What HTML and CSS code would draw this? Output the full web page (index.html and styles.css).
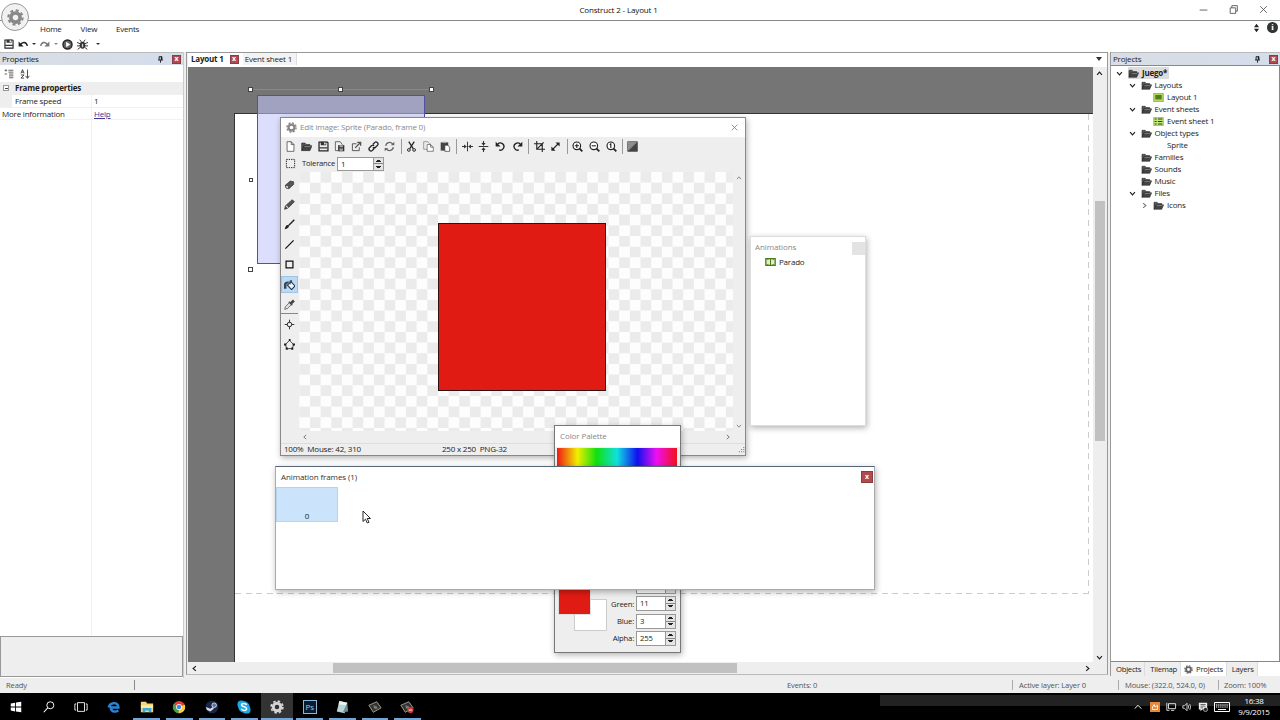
FILE: index.html
```html
<!DOCTYPE html>
<html lang="en">
<head>
  <meta charset="UTF-8">
  <title>Construct 2 - Layout 1</title>
  <link rel="stylesheet" href="styles.css">
</head>
<body>
<svg class="defs">
  <symbol id="gear" viewBox="0 0 16 16"><circle cx="8" cy="8" r="4.3" fill="none" stroke="currentColor" stroke-width="3.4"/><circle cx="8" cy="8" r="6.7" fill="none" stroke="currentColor" stroke-width="2" stroke-dasharray="2.8 2.46"/></symbol>
  <symbol id="save" viewBox="0 0 16 16"><path d="M1.5 1.5h12l1 1v12h-13z" fill="none" stroke="#222" stroke-width="1.8"/><path d="M4 1h8v5H4zM2 9h12v2H2z" fill="#333"/><path d="M9 2h2v3H9z" fill="#fff"/></symbol>
  <symbol id="undo" viewBox="0 0 16 16"><path d="M4 9c3-5 9-5 11 2" fill="none" stroke="#222" stroke-width="2.4"/><path d="M1 4v8h8z" fill="#222"/></symbol>
  <symbol id="redo" viewBox="0 0 16 16"><path d="M12 9C9 4 3 4 1 11" fill="none" stroke="#777" stroke-width="2.4"/><path d="M15 4v8H7z" fill="#777"/></symbol>
  <symbol id="play" viewBox="0 0 16 16"><circle cx="8" cy="8" r="6.6" fill="#666" stroke="#222" stroke-width="2"/><path d="M6 4l6 4-6 4z" fill="#fff"/></symbol>
  <symbol id="bug" viewBox="0 0 16 16"><ellipse cx="8" cy="9" rx="4" ry="5" fill="#333"/><path d="M4 1l3 4M12 1L9 5M0 5l5 2M16 5l-5 2M0 10h5M16 10h-5M1 15l4-3M15 15l-4-3" stroke="#333" stroke-width="1.4"/><path d="M7 7h2v5H7z" fill="#ccc"/></symbol>
  <symbol id="pin" viewBox="0 0 10 10"><path d="M3 1h4v4.5M3 1v4.5M1.5 5.7h7M5 6v3.5" fill="none" stroke="#111" stroke-width="1.3"/><path d="M5.5 1H7v4.5H5.5z" fill="#111"/></symbol>
  <symbol id="group" viewBox="0 0 16 16"><path d="M1 2h4M3 1v3M1 8h4M7 2h8M7 5h8M8 8h7M8 11h7M8 14h7" stroke="#444" stroke-width="1.3"/></symbol>
  <symbol id="sort" viewBox="0 0 16 16"><path d="M1.5 7L4 1l2.500 6M2.500 5h3M1.500 9.500h5l-5 5h5M12 1v13M9 11l3 4 3-4" fill="none" stroke="#333" stroke-width="1.400"/></symbol>
  <symbol id="folder" viewBox="0 0 16 14"><path d="M1 13V2h5l1 2h6v3" fill="#555" stroke="#333"/><path d="M1 13l3-7h12l-3 7z" fill="#444" stroke="#222" stroke-width=".8"/><path d="M5 7h9" stroke="#999"/></symbol>
  <symbol id="layout" viewBox="0 0 16 14"><path d="M.5.5h15v13H.5z" fill="#b8dd62" stroke="#719536"/><path d="M3 3h10v7H3z" fill="#547b20"/></symbol>
  <symbol id="sheet" viewBox="0 0 16 14"><path d="M.5.5h15v13H.5z" fill="#c4ea7a" stroke="#85a548"/><path d="M2 3h3M2 7h3M2 11h3M7 3h7M7 7h7M7 11h7" stroke="#28400e" stroke-width="1.700"/></symbol>
  <symbol id="chev" viewBox="0 0 10 10"><path d="M1.500 3L5 7l3.500-4" fill="none" stroke="currentColor" stroke-width="1.600"/></symbol>
  <symbol id="page" viewBox="0 0 16 16"><path d="M3 1h6l4 4v10H3zM9 1v4h4" fill="#fff" stroke="#333"/></symbol>
  <symbol id="saveall" viewBox="0 0 16 16"><path d="M12 6V5L9 1H2v13h4" fill="none" stroke="#333"/><path d="M6 6h9v9H6z" fill="#333"/><path d="M8 6h5v3H8zM8 11h5v3H8z" fill="#aaa"/></symbol>
  <symbol id="export" viewBox="0 0 16 16"><path d="M8 4H2v10h10V9" fill="none" stroke="#555" stroke-width="1.400"/><path d="M6 10l7-7M9 2h5v5" fill="none" stroke="#555" stroke-width="2"/></symbol>
  <symbol id="link" viewBox="0 0 16 16"><path d="M7 5l3-3c2-2 6 1 4 4l-3 3c-1 1-3 1-4 0M9 11l-3 3c-2 2-6-1-4-4l3-3c1-1 3-1 4 0" fill="none" stroke="#222" stroke-width="1.900"/></symbol>
  <symbol id="refresh" viewBox="0 0 16 16"><path d="M2.500 7A5.500 5.500 0 0 1 12.500 4.500M13.500 9A5.500 5.500 0 0 1 3.500 11.500" fill="none" stroke="#666" stroke-width="1.800"/><path d="M10 6h5V1zM6 10H1v5z" fill="#666"/></symbol>
  <symbol id="cut" viewBox="0 0 16 16"><path d="M4 1l6.500 10M12 1L5.500 11" stroke="#222" stroke-width="1.800"/><circle cx="4.200" cy="13" r="2" fill="none" stroke="#222" stroke-width="1.400"/><circle cx="11.800" cy="13" r="2" fill="none" stroke="#222" stroke-width="1.400"/></symbol>
  <symbol id="copy" viewBox="0 0 16 16"><path d="M1 1h6l3 3v8H1z" fill="#eee" stroke="#777"/><path d="M6 5h5l4 4v6H6zM11 5v4h4" fill="#fff" stroke="#555"/></symbol>
  <symbol id="paste" viewBox="0 0 16 16"><path d="M1 2h11v12H1z" fill="#444"/><path d="M4 1h5v2H4z" fill="#aaa"/><path d="M7 6h4l3 3v6H7z" fill="#fff" stroke="#333"/></symbol>
  <symbol id="flip" viewBox="0 0 16 16"><path d="M8 1v14" stroke="#333" stroke-width="1.400"/><path d="M0 8h6M16 8h-6" stroke="#333" stroke-width="1.600"/><path d="M3 5l4 3-4 3zM13 5L9 8l4 3z" fill="#333"/></symbol>
  <symbol id="rot" viewBox="0 0 16 16"><path d="M4 4.500A5.200 5.200 0 1 1 6 13" fill="none" stroke="#222" stroke-width="2"/><path d="M1 1v7h7z" fill="#222"/></symbol>
  <symbol id="crop" viewBox="0 0 16 16"><path d="M4 0v12h12M0 4h12v12M5 11l9-9" fill="none" stroke="#222" stroke-width="1.600"/></symbol>
  <symbol id="resize" viewBox="0 0 16 16"><path d="M4 12l8-8" stroke="#222" stroke-width="1.600"/><path d="M8 2h6v6zM2 8v6h6z" fill="#222"/></symbol>
  <symbol id="lens" viewBox="0 0 16 16"><circle cx="7" cy="7" r="5.500" fill="#fff" stroke="#222" stroke-width="1.700"/><path d="M11 11l4 4" stroke="#222" stroke-width="2.600"/></symbol>
  <symbol id="contrast" viewBox="0 0 16 16"><path d="M1 1h14v14H1z" fill="#aaa" stroke="#333"/><path d="M15 1v14H1z" fill="#444"/><path d="M2 12L12 2M2 9l7-7M2 6l4-4" stroke="#555"/></symbol>
  <symbol id="select" viewBox="0 0 16 16"><path d="M2 2h12v12H2z" fill="none" stroke="#222" stroke-width="1.400" stroke-dasharray="2 1.400"/></symbol>
  <symbol id="eraser" viewBox="0 0 16 16"><path d="M2 9l7-6 5 1v4l-7 6-4-1z" fill="#555" stroke="#333"/><path d="M2 9l4 1 1 4-4-1z" fill="#eee" stroke="#333"/></symbol>
  <symbol id="pencil" viewBox="0 0 16 16"><path d="M1 15l1-5L12 1l3 3-9 9z" fill="#555" stroke="#222"/><path d="M3 10l3 3" stroke="#ddd" stroke-width="1.500"/></symbol>
  <symbol id="brush" viewBox="0 0 16 16"><path d="M15 1L7 9" stroke="#222" stroke-width="2"/><path d="M1 15c1-5 3-7 6-6 1 3-2 5-6 6z" fill="#222"/></symbol>
  <symbol id="line" viewBox="0 0 16 16"><path d="M2 14L14 2" stroke="#111" stroke-width="1.700"/></symbol>
  <symbol id="rect" viewBox="0 0 16 16"><path d="M3 3h10v10H3z" fill="#eee" stroke="#111" stroke-width="1.800"/></symbol>
  <symbol id="fill" viewBox="0 0 16 16"><path d="M5 9l5-5 6 6-5 5.500z" fill="#eef6ff" stroke="#234" stroke-width="1.500"/><path d="M9 8V2.500q1-2 2 0V5" fill="none" stroke="#234" stroke-width="1.200"/><path d="M0 14V7q2-4 8-3L3.500 8v6z" fill="#345"/></symbol>
  <symbol id="picker" viewBox="0 0 16 16"><path d="M1 15l1-4 6-6 3 3-6 6z" fill="#ddd" stroke="#444"/><path d="M7 4l5 5M10 5l3-3 1.500 1.500-3 3z" fill="#444" stroke="#444" stroke-width="1.800"/></symbol>
  <symbol id="origin" viewBox="0 0 16 16"><circle cx="8" cy="8" r="3.300" fill="none" stroke="#222" stroke-width="1.400"/><path d="M8 1v4M8 11v4M1 8h4M11 8h4" stroke="#222" stroke-width="1.300"/></symbol>
  <symbol id="poly" viewBox="0 0 16 16"><path d="M8 2l6 6-2 6H4L2 8z" fill="none" stroke="#222" stroke-width="1.200"/><path d="M7 0h2.500v3H7zM12.500 6.500H16v3h-3.500zM0 6.500h3.500v3H0zM2.500 12.500h3v3h-3zM10.500 12.500h3v3h-3z" fill="#222"/></symbol>
</svg>

<div class="app">
  <header class="titlebar">
    <span class="title">Construct 2 - Layout 1</span>
    <div class="winbtns">
      <svg viewBox="0 0 10 10"><path d="M1.500 5.500h7" stroke="#777"/></svg>
      <svg viewBox="0 0 10 10"><path d="M2 3.500h5v5H2zM3.500 3.500V1.500h5v5H7" fill="none" stroke="#555" stroke-width=".8"/></svg>
      <svg viewBox="0 0 10 10"><path d="M2 2l6 6M8 2L2 8" stroke="#555" stroke-width=".8"/></svg>
    </div>
  </header>
  <div class="orb"><svg><use href="#gear"/></svg></div>
  <nav class="menu">
    <span>Home</span><span>View</span><span>Events</span>
    <div class="menu-right">
      <svg class="updown" viewBox="0 0 8 12"><path d="M1 5l3-4 3 4zM1 7l3 4 3-4z" fill="#222"/></svg>
      <span class="info">i</span>
    </div>
  </nav>
  <div class="quick">
    <svg><use href="#save"/></svg>
    <svg><use href="#undo"/></svg><i class="caret"></i>
    <svg><use href="#redo"/></svg><i class="caret dim"></i>
    <svg class="big"><use href="#play"/></svg>
    <svg class="big"><use href="#bug"/></svg>
    <i class="caret more"></i>
  </div>

  <main class="work">
    <aside class="props">
      <div class="panel-head"><span>Properties</span><svg><use href="#pin"/></svg><b class="close">x</b></div>
      <div class="prop-tools"><svg><use href="#group"/></svg><svg><use href="#sort"/></svg></div>
      <div class="prop-group"><i class="minus"></i>Frame properties</div>
      <div class="prop-row sub"><span>Frame speed</span><span>1</span></div>
      <div class="prop-row"><span>More information</span><span><a href="#">Help</a></span></div>
      <div class="prop-rest"></div>
      <div class="prop-desc"></div>
    </aside>

    <section class="editor">
      <div class="tabs">
        <b>Layout 1</b><b class="close">x</b><span class="tab">Event sheet 1</span><i class="caret tab-menu"></i>
      </div>
      <div class="canvas-row">
        <div class="canvas">
          <div class="sheet"><div class="bounds"></div></div>
          <div class="sprite"></div>
          <div class="selline"></div>
          <i class="handle h1"></i><i class="handle h2"></i><i class="handle h3"></i><i class="handle h4"></i><i class="handle h5"></i>
        </div>
        <div class="vscroll">
          <svg class="up"><use href="#chev"/></svg><div class="vthumb"></div><svg class="down"><use href="#chev"/></svg>
        </div>
      </div>
      <div class="hscroll">
        <svg class="left"><use href="#chev"/></svg><div class="hthumb"></div><svg class="right"><use href="#chev"/></svg>
      </div>
    </section>

    <aside class="projects">
      <div class="panel-head"><span>Projects</span><svg><use href="#pin"/></svg><b class="close">x</b></div>
      <div class="tree">
        <div class="node l0"><svg class="ch"><use href="#chev"/></svg><span class="root"><svg class="ic"><use href="#folder"/></svg><b>Juego*</b></span></div>
        <div class="node l1"><svg class="ch"><use href="#chev"/></svg><svg class="ic"><use href="#folder"/></svg>Layouts</div>
        <div class="node l2"><i class="ch"></i><svg class="ic"><use href="#layout"/></svg>Layout 1</div>
        <div class="node l1"><svg class="ch"><use href="#chev"/></svg><svg class="ic"><use href="#folder"/></svg>Event sheets</div>
        <div class="node l2"><i class="ch"></i><svg class="ic"><use href="#sheet"/></svg>Event sheet 1</div>
        <div class="node l1"><svg class="ch"><use href="#chev"/></svg><svg class="ic"><use href="#folder"/></svg>Object types</div>
        <div class="node l2"><i class="ch"></i><i class="ic"></i>Sprite</div>
        <div class="node l1"><i class="ch"></i><svg class="ic"><use href="#folder"/></svg>Families</div>
        <div class="node l1"><i class="ch"></i><svg class="ic"><use href="#folder"/></svg>Sounds</div>
        <div class="node l1"><i class="ch"></i><svg class="ic"><use href="#folder"/></svg>Music</div>
        <div class="node l1"><svg class="ch"><use href="#chev"/></svg><svg class="ic"><use href="#folder"/></svg>Files</div>
        <div class="node l2"><svg class="ch right dimmed"><use href="#chev"/></svg><svg class="ic"><use href="#folder"/></svg>Icons</div>
      </div>
      <div class="dock-tabs">
        <span>Objects</span><span>Tilemap</span><span class="on"><svg><use href="#gear"/></svg>Projects</span><span>Layers</span>
      </div>
    </aside>
  </main>

  <footer class="status">
    <span class="s-ready">Ready</span><span class="s-events">Events: 0</span><span class="s-layer">Active layer: Layer 0</span><span class="s-mouse">Mouse: (322.0, 524.0, 0)</span><span class="s-zoom">Zoom: 100%</span>
  </footer>

  <footer class="taskbar">
    <div class="task"><svg viewBox="0 0 16 16"><path d="M2 4l5-1v4.500H2zM8 2.800L14 2v5.500H8zM2 8.500h5V13l-5-1zM8 8.500h6V14l-6-.8z" fill="#fff"/></svg></div>
    <div class="task"><svg viewBox="0 0 16 16"><circle cx="9.500" cy="6" r="4" fill="none" stroke="#fff" stroke-width="1.100"/><path d="M6.500 9L2 14" stroke="#fff" stroke-width="1.200"/></svg></div>
    <div class="task"><svg viewBox="0 0 16 16"><path d="M4 3h8v10H4zM2.500 4.500h-1.500v7h1.500M13.500 4.500H15v7h-1.500" fill="none" stroke="#fff"/></svg></div>
    <div class="task"><svg viewBox="0 0 16 16"><path d="M2 8.500C3 3 12.500 1 13 8.500H5.500M5 7c-2 5 3 8 8 5" fill="none" stroke="#2a84d6" stroke-width="2.800"/></svg></div>
    <div class="task run"><svg viewBox="0 0 16 16"><path d="M1 2h6l1 2h7v10H1z" fill="#f5d77a"/><path d="M1 6h14v3H1z" fill="#fbe9a8"/><path d="M3 14V9h10v5h-3v-2H6v2z" fill="#39a9dc"/></svg></div>
    <div class="task run"><svg viewBox="0 0 16 16"><circle cx="8" cy="8" r="7" fill="#e5402f"/><path d="M8 8L2 4.500A7 7 0 0 0 7.500 15z" fill="#3fa650"/><path d="M8 8l6.600-2.500A7 7 0 0 1 7.500 15z" fill="#f6cd3a"/><circle cx="8" cy="8" r="3.300" fill="#fff"/><circle cx="8" cy="8" r="2.500" fill="#4488e8"/></svg></div>
    <div class="task run"><svg viewBox="0 0 16 16"><circle cx="8" cy="8" r="7.200" fill="#1b2748"/><circle cx="10.500" cy="6" r="2.600" fill="#5a6f9a" stroke="#dde"/><path d="M1 8l5 2 3-2 1 2-4 3-4-2z" fill="#dde"/></svg></div>
    <div class="task run"><svg viewBox="0 0 16 16"><circle cx="5" cy="5" r="4.500" fill="#1fa8e6"/><circle cx="11" cy="11" r="4.500" fill="#1fa8e6"/><circle cx="8" cy="8" r="6.500" fill="#1fa8e6"/><path d="M11 5.500c-1-2-6-2-5.800.3C5.500 8.300 11 7.300 11 10c-.2 2.500-5 2.500-6 0" fill="none" stroke="#fff" stroke-width="1.700"/></svg></div>
    <div class="task run active"><svg class="cog"><use href="#gear"/></svg></div>
    <div class="task run"><span class="ps">Ps</span></div>
    <div class="task run"><svg viewBox="0 0 16 16"><path d="M5 1l9 2-3 12-9-2z" fill="#b9d3d6"/><path d="M5 1l9 2-1 3-9-1z" fill="#e8f2f2"/><path d="M9 14l5-11 1 10z" fill="#6c8f90"/></svg></div>
    <div class="task run"><svg viewBox="0 0 16 16"><path d="M1 6l9-4 5 7-9 5z" fill="#33332f" stroke="#aaa89c"/><path d="M6 6l4 1 1 3-4 0z" fill="#777"/></svg></div>
    <div class="task run"><svg viewBox="0 0 16 16"><path d="M1 6l9-4 5 7-9 5z" fill="#33332f" stroke="#aaa89c"/><path d="M6 6l4 1 1 3-4 0z" fill="#777"/><circle cx="12" cy="11.500" r="3.500" fill="#d03a36"/><path d="M10 11.500h4" stroke="#fff"/></svg></div>
    <div class="tray">
      <svg viewBox="0 0 12 12"><path d="M2 8l4-4 4 4" fill="none" stroke="#fff" stroke-width="1.200"/></svg>
      <svg viewBox="0 0 12 12"><path d="M0 0h12v12H0z" fill="#e5883a"/><path d="M3 9V6l2-3 1 3 3-2v5z" fill="none" stroke="#fff"/></svg>
      <svg viewBox="0 0 12 12"><path d="M3 2h8.500v6H3zM6 10h4M1 1v9h3" fill="none" stroke="#fff"/></svg>
      <svg viewBox="0 0 12 12"><path d="M1 4.500h2l3-3v9l-3-3H1zM7.500 4q1 2 0 4M9.300 2.500q2 3.500 0 7" fill="none" stroke="#fff" stroke-width=".9"/></svg>
      <svg viewBox="0 0 12 12"><path d="M1 1h10v8H5l-2 2V9H1z" fill="#eee"/><path d="M3 3h6M3 5h6M3 7h3" stroke="#222" stroke-width=".8"/><circle cx="9" cy="9" r="2.500" fill="#222" stroke="#eee" stroke-width=".7"/></svg>
      <svg class="kbd" viewBox="0 0 16 10"><path d="M.5.500h15v9H.5z" fill="none" stroke="#fff"/><path d="M2 3h12M2 5h12" stroke="#fff" stroke-dasharray="1.300 .8"/><path d="M4 7.500h8" stroke="#fff"/></svg>
    </div>
    <div class="clock"><span>16:38</span><span>9/9/2015</span></div>
  </footer>

  <div class="win edit">
    <div class="win-title"><svg><use href="#gear"/></svg><span>Edit image: Sprite (Parado, frame 0)</span>
      <svg class="x" viewBox="0 0 10 10"><path d="M1 1l8 8M9 1L1 9" stroke="#666"/></svg></div>
    <div class="tools">
      <svg><use href="#page"/></svg><svg><use href="#folder"/></svg><svg><use href="#save"/></svg><svg><use href="#saveall"/></svg><svg><use href="#export"/></svg><svg><use href="#link"/></svg><svg><use href="#refresh"/></svg><i></i>
      <svg><use href="#cut"/></svg><svg><use href="#copy"/></svg><svg><use href="#paste"/></svg><i></i>
      <svg><use href="#flip"/></svg><svg class="turn"><use href="#flip"/></svg><svg><use href="#rot"/></svg><svg class="mirror"><use href="#rot"/></svg><i></i>
      <svg><use href="#crop"/></svg><svg><use href="#resize"/></svg><i></i>
      <svg viewBox="0 0 16 16"><use href="#lens"/><path d="M4 7h6M7 4v6" stroke="#222" stroke-width="1.600"/></svg><svg viewBox="0 0 16 16"><use href="#lens"/><path d="M4 7h6" stroke="#222" stroke-width="1.600"/></svg><svg viewBox="0 0 16 16"><use href="#lens"/><path d="M5.500 5.500L7 4v6" fill="none" stroke="#222" stroke-width="1.600"/></svg><i></i>
      <svg><use href="#contrast"/></svg>
    </div>
    <div class="options"><svg><use href="#select"/></svg><span>Tolerance</span><div class="spin"><span>1</span><i></i></div></div>
    <div class="edit-body">
      <div class="side">
        <div><svg><use href="#eraser"/></svg></div>
        <div><svg><use href="#pencil"/></svg></div>
        <div><svg><use href="#brush"/></svg></div>
        <div><svg><use href="#line"/></svg></div>
        <div><svg><use href="#rect"/></svg></div>
        <div class="on"><svg><use href="#fill"/></svg></div>
        <div class="last"><svg><use href="#picker"/></svg></div>
        <div><svg><use href="#origin"/></svg></div>
        <div><svg><use href="#poly"/></svg></div>
      </div>
      <div class="checker"><div class="red"></div></div>
      <div class="edit-v"><svg class="up"><use href="#chev"/></svg><svg><use href="#chev"/></svg></div>
    </div>
    <div class="edit-h"><svg class="left"><use href="#chev"/></svg><svg class="right"><use href="#chev"/></svg></div>
    <div class="edit-status"><span>100%&nbsp; Mouse: 42, 310</span><span>250 x 250&nbsp; PNG-32</span>
      <svg viewBox="0 0 8 8"><path d="M6 1h1.200v1.200H6zM3.500 3.500h1.200v1.200H3.500zM6 3.500h1.200v1.200H6zM1 6h1.200v1.200H1zM3.500 6h1.200v1.200H3.500zM6 6h1.200v1.200H6z" fill="#777"/></svg></div>
  </div>

  <div class="win anims">
    <div class="win-title"><span>Animations</span><i></i></div>
    <div class="anim"><svg viewBox="0 0 16 12"><path d="M1 1h14v10H1z" fill="#dff0b8" stroke="#4b7c24" stroke-width="2"/><path d="M8 1v10M4 1v2M12 1v2M4 9v2M12 9v2" stroke="#4b7c24" stroke-width="1.500"/></svg>Parado</div>
  </div>

  <div class="win palette">
    <div class="win-title"><span>Color Palette</span></div>
    <div class="hue"></div>
    <div class="pal-bottom">
      <div class="swatches"><div class="back"></div><div class="front"></div></div>
      <div class="channels">
        <div class="chan"><label></label><div class="spin"><span></span><i></i></div></div>
        <div class="chan"><label>Green:</label><div class="spin"><span>11</span><i></i></div></div>
        <div class="chan"><label>Blue:</label><div class="spin"><span>3</span><i></i></div></div>
        <div class="chan"><label>Alpha:</label><div class="spin"><span>255</span><i></i></div></div>
      </div>
    </div>
  </div>

  <div class="win frames">
    <div class="win-title"><span>Animation frames (1)</span><b class="close">x</b></div>
    <div class="frame">0</div>
  </div>
  <svg class="cursor" viewBox="0 0 9 14"><path d="M1 1v10.500l2.500-2.300 1.800 3.800 1.700-.8-1.800-3.700h3.300z" fill="#fff" stroke="#111" stroke-width=".9"/></svg>
</div>
</body>
</html>
```
FILE: styles.css
```css
* { box-sizing: border-box; }
body { margin: 0; background: #fff; font: 8px/12px "Open Sans", "Noto Sans", sans-serif; letter-spacing: -.2px; color: #1c1c1c; overflow: hidden; }
svg { display: block; flex: none; width: 11px; height: 11px; overflow: visible; }
i { font-style: normal; }
.defs { position: absolute; width: 0; height: 0; }
.app { position: relative; width: 1280px; height: 720px; display: flex; flex-direction: column; overflow: hidden; }

/* title and menu */
.titlebar { height: 21px; border-bottom: 1px solid #888; display: flex; align-items: center; justify-content: center; position: relative; padding-right: 43px; }
.title { color: #111; letter-spacing: -.15px; }
.winbtns { position: absolute; right: 11px; top: 4px; display: flex; gap: 19px; }
.orb { position: absolute; left: 1px; top: 3px; width: 28px; height: 28px; border: 1px solid #999; border-radius: 50%; background: #f1f1f1; display: flex; align-items: center; justify-content: center; color: #888; }
.orb svg { width: 17px; height: 17px; }
.menu { height: 15px; display: flex; align-items: center; padding-left: 40px; gap: 19px; letter-spacing: -.25px; }
.menu-right { margin-left: auto; display: flex; align-items: center; gap: 7px; padding: 0 2px 2px 0; }
.updown { width: 7px; height: 10px; }
.info { width: 11px; height: 11px; border-radius: 50%; background: #333; color: #fff; font: bold 9px/11px "Liberation Serif", serif; text-align: center; }
.quick { height: 16px; display: flex; align-items: center; padding-left: 4px; gap: 4px; }
.quick svg { width: 10px; height: 10px; }
.quick .big { width: 11px; height: 11px; }
.caret { border: 2px solid transparent; border-top: 2.500px solid #333; border-bottom: 0; width: 4px; }
.quick .dim { border-top-color: #888; }
.quick .more { margin-left: 4px; }

/* docked areas */
.work { height: 626px; display: flex; gap: 2px; background: #eee; }
.close { width: 9px; height: 9px; background: #b04b52; border: 1px solid #8c3b40; color: #fff; font-size: 7px; line-height: 6px; text-align: center; flex: none; letter-spacing: 0; }
.panel-head { height: 13px; display: flex; align-items: center; background: linear-gradient(90deg, #dadde5, #d3deeb); border-top: 1px solid #bbb; padding: 0 2px; }
.panel-head span { margin-top: -1px; }
.panel-head svg { width: 7px; height: 7px; margin-left: auto; margin-right: 8px; }
.props { width: 184px; background: #fff; border-right: 1px solid #ccc; display: flex; flex-direction: column; }
.prop-tools { height: 17px; display: flex; gap: 6px; align-items: center; padding-left: 4px; }
.prop-tools svg { width: 10px; height: 10px; }
.prop-group { height: 13px; background: #eee; font-weight: bold; display: flex; align-items: center; padding: 0 0 1px 3px; gap: 6px; }
.minus { width: 6px; height: 6px; border: 1px solid #999; background: linear-gradient(#444, #444) center / 3px 1px no-repeat #fff; }
.prop-row { height: 12.500px; display: flex; border-bottom: 1px solid #f1f1f1; }
.prop-row span:first-child { width: 92px; padding-left: 2px; border-right: 1px solid #f1f1f1; }
.prop-row span:last-child { padding-left: 2px; }
.prop-row.sub { background: linear-gradient(#eee, #eee) 0 0 / 12px 100% no-repeat; }
.prop-row.sub span:first-child { padding-left: 15px; }
a { color: #3a3a98; }
.prop-rest { flex: 1; width: 92px; border-right: 1px solid #f1f1f1; }
.prop-desc { height: 41px; margin-bottom: 1px; border: 1px solid #999; background: #eee; }

.editor { width: 922px; border: 1px solid #999; border-bottom-color: #bbb; display: flex; flex-direction: column; padding-left: 1px; margin-bottom: 3px; }
.tabs { height: 14px; display: flex; align-items: center; background: #fff; padding: 0 0 2px 3px; }
.tabs .close { margin: 1px 4px 0 6px; }
.tab { padding: 0 4px 0 2px; background: #f3f3f3; border-right: 1px solid #ddd; height: 12px; }
.tab-menu { margin-left: auto; margin-right: 5px; border-width: 3px; border-top-width: 4px; width: 6px; }
.canvas-row { flex: 1; display: flex; min-height: 0; }
.canvas { position: relative; flex: 1; background: #757575; overflow: hidden; }
.sheet { position: absolute; left: 46px; top: 46px; right: 0; bottom: 0; background: #fff; border-top: 1px solid #333; border-left: 1px solid #333; }
.bounds { width: 854px; height: 480px; background: repeating-linear-gradient(90deg, #ccc 0 6px, transparent 6px 10.600px) 0 100% / 100% 1px no-repeat, repeating-linear-gradient(#ccc 0 6px, transparent 6px 10.600px) 100% 0 / 1px 100% no-repeat; }
.sprite { position: absolute; left: 69px; top: 28px; width: 168px; height: 169px; background: rgba(196, 196, 250, .57); border: 1px solid #5252a0; }
.selline { position: absolute; left: 66px; top: 22px; width: 174px; height: 1px; background: #8a8a8a; }
.handle { position: absolute; width: 5px; height: 5px; background: #fff; border: 1px solid #444; }
.h1 { left: 60px; top: 20px; }
.h2 { left: 150px; top: 20px; }
.h3 { left: 241px; top: 20px; }
.h4 { left: 61px; top: 111px; width: 4px; height: 4px; }
.h5 { left: 60px; top: 200px; }
.vscroll { width: 14px; background: #eee; padding: 3px 2px 1px 1px; display: flex; flex-direction: column; align-items: center; }
.vscroll svg, .hscroll svg { width: 7px; height: 7px; }
.vthumb { width: 10px; height: 240px; background: #c1c1c1; margin-top: 124px; }
.up { transform: rotate(180deg); }
.left { transform: rotate(90deg); }
.right { transform: rotate(-90deg); }
.vscroll .down { margin-top: auto; }
.hscroll { height: 12px; background: #eee; display: flex; align-items: center; padding: 0 16px 0 3px; }
.hthumb { width: 404px; height: 10px; background: #c1c1c1; margin-left: 135px; }
.hscroll .right { margin-left: auto; }

.projects { width: 170px; border-left: 1px solid #999; background: #fff; display: flex; flex-direction: column; margin-bottom: 2px; }
.tree { flex: 1; padding: 1px 0 0 5px; border: 1px solid #888; border-left: 0; }
.node { height: 12px; display: flex; align-items: center; }
.l1 { padding-left: 12.500px; }
.l2 { padding-left: 25px; }
.ch { width: 7px; height: 7px; margin-right: 5px; flex: none; }
.dimmed { color: #777; }
.ic { width: 11px; height: 9px; margin-right: 3px; flex: none; }
.root { display: flex; align-items: center; background: #dcdcdc; padding-right: 2px; height: 12px; }
.dock-tabs { height: 14px; display: flex; align-items: center; }
.dock-tabs span { background: #eee; border-right: 1px solid #ddd; padding: 0 3px 0 5px; height: 14px; line-height: 14px; display: flex; font-size: 7.700px; letter-spacing: -.25px; }
.dock-tabs .on { background: #fff; padding-left: 3px; }
.dock-tabs svg { width: 9px; height: 9px; margin: 3px 3px 0 0; color: #666; }

.status { height: 15px; background: #eee; display: flex; align-items: center; color: #555; font-size: 7.600px; padding-bottom: 2px; letter-spacing: -.15px; }
.status span { line-height: 10px; }
.s-ready { width: 135px; padding-left: 6px; border-right: 1px solid #888; }
.s-events { width: 878px; padding-left: 652px; border-right: 1px solid #aaa; }
.s-layer { width: 106px; padding-left: 6px; border-right: 1px solid #aaa; }
.s-mouse { width: 100px; padding-left: 6px; border-right: 1px solid #aaa; }
.s-zoom { padding-left: 5px; }

/* taskbar */
.taskbar { height: 27px; background: linear-gradient(#222, #222) 880px 2px / 400px 11px no-repeat #000; display: flex; align-items: center; }
.task { width: 32.600px; height: 27px; display: flex; align-items: center; justify-content: center; position: relative; flex: none; }
.task svg { width: 14px; height: 14px; }
.task .cog { color: #d5d5d5; }
.run::after { content: ""; position: absolute; left: 3px; right: 3px; bottom: 0; height: 2px; background: #73a5d8; }
.active { background: #333; }
.active::after { left: 0; right: 0; }
.ps { width: 14px; height: 14px; border: 1px solid #8ab8d8; background: #0a1c30; color: #9ecbea; font-size: 8px; line-height: 11px; text-align: center; }
.tray { margin-left: auto; display: flex; gap: 6px; align-items: center; padding-right: 7px; }
.tray svg { width: 10px; height: 10px; }
.tray svg:first-child { margin-right: 1px; }
.tray .kbd { width: 16px; height: 10px; }
.clock { width: 34px; margin-right: 9px; display: flex; flex-direction: column; align-items: center; color: #fff; line-height: 11px; padding-bottom: 1px; letter-spacing: -.25px; }

/* floating windows */
.win { position: absolute; background: #fff; border: 1px solid #aaa; box-shadow: 1px 2px 6px rgba(0,0,0,.3); }
.win-title { height: 19px; display: flex; align-items: center; color: #888; background: #fff; }
.win-title span { margin-top: -1px; }
.edit { left: 280px; top: 117px; width: 466px; height: 339px; background: #eee; border-color: #888; }
.edit .win-title { padding: 0 7px 1px 5px; gap: 3px; letter-spacing: -.18px; }
.edit .x { width: 7px; height: 7px; margin-left: auto; }
.tools { height: 18px; display: flex; align-items: center; padding-left: 3.500px; }
.tools svg { margin-right: 5.670px; }
.tools i { width: 1px; height: 15px; background: #999; margin-right: 4.300px; }
.turn { transform: rotate(90deg); }
.mirror { transform: scaleX(-1); }
.options { height: 17px; display: flex; align-items: center; padding-left: 3.500px; }
.options > span { margin-left: 6.500px; width: 35px; font-size: 7.600px; margin-top: -1px; }
.spin { height: 14px; border: 1px solid #999; background: #fff; display: flex; padding-left: 3px; line-height: 11px; }
.spin i { width: 10px; margin-left: auto; background: conic-gradient(#222 0 0) 50% 2px / 3px 1px no-repeat, linear-gradient(#222, #222) 50% 3px / 5px 1px no-repeat, linear-gradient(#888, #888) 0 50% / 100% 1px no-repeat, linear-gradient(#222, #222) 50% 8px / 5px 1px no-repeat, linear-gradient(#222, #222) 50% 9px / 3px 1px no-repeat #e4e4e4; border-left: 1px solid #999; }
.options .spin { width: 47px; }
.edit-body { display: flex; height: 259px; }
.side { width: 18px; padding-top: 2px; }
.side div { height: 20px; width: 17px; padding: 4.500px 0 0 3px; }
.side .on { background: #bcd8f3; border: 1px solid #9cc3ea; height: 17px; margin: 2px 0 1px; padding: 2px; }
.side .last { border-bottom: 1px solid #888; }
.checker { width: 434px; padding: 51px 0 0 139px; background: repeating-conic-gradient(#fdfdfd 0 25%, #ebebeb 0 50%) 0.300px 0 / 21.340px 21.340px; }
.red { width: 168px; height: 168px; background: #df1b14; border: 1px solid #301010; }
.edit-v { width: 12px; display: flex; flex-direction: column; justify-content: space-between; align-items: center; padding: 3px 0 2px; color: #888; }
.edit-v svg, .edit-h svg { width: 6px; height: 6px; }
.edit-h { height: 12px; display: flex; align-items: center; justify-content: space-between; padding: 0 14px 0 21px; color: #777; }
.edit-status { height: 12px; border-top: 1px solid #ddd; display: flex; align-items: center; padding-left: 3px; }
.edit-status span { margin-top: -1px; }
.edit-status span:first-child { width: 158px; }
.edit-status svg { width: 7px; height: 7px; margin-left: auto; }

.anims { left: 750px; top: 236px; width: 116px; height: 190px; border-color: #ddd; }
.anims .win-title { padding-left: 4px; height: 20px; }
.anims .win-title span { margin-top: 0; letter-spacing: -.1px; }
.anims .win-title i { width: 13px; height: 13px; background: #e3e3e3; margin: 2px 0 0 auto; }
.anim { display: flex; align-items: center; padding-left: 14px; gap: 3px; line-height: 10px; }
.anim svg { width: 11px; height: 8px; }

.palette { left: 554px; top: 425px; width: 127px; height: 228px; background: #eee; border-color: #777; }
.palette .win-title { height: 21px; padding: 0 0 1px 5px; letter-spacing: -.1px; }
.hue { height: 60px; margin: 1px 3px 0 2px; background: linear-gradient(90deg, #f01818, #f0f000 17%, #10e010 33%, #10e0e0 50%, #1010f0 67%, #f010f0 83%, #f01018); }
.pal-bottom { display: flex; padding: 71px 4px 0 3px; justify-content: space-between; }
.swatches { position: relative; width: 49px; height: 52px; }
.front { position: absolute; left: 0; top: 4px; width: 33px; height: 32px; background: #df1b14; border: 1px solid #ddd; }
.back { position: absolute; left: 16px; top: 20px; width: 33px; height: 32px; background: #fff; border: 1px solid #ccc; }
.channels { display: flex; flex-direction: column; gap: 2.300px; }
.chan { display: flex; justify-content: flex-end; align-items: center; gap: 2px; font-size: 7.700px; height: 15px; }
.chan .spin { width: 40px; height: 15px; line-height: 12px; }

.frames { left: 275px; top: 466px; width: 600px; height: 124px; border-top-color: #567; z-index: 2; }
.frames .win-title { color: #333; padding: 0 1px 0 5px; height: 20px; letter-spacing: -.1px; }
.frames .close { width: 12px; height: 12px; line-height: 9px; margin-left: auto; }
.frame { width: 62px; height: 35px; background: #cce4fb; border: 1px solid #b4d4f0; padding-top: 22px; text-align: center; }
.cursor { position: absolute; left: 362px; top: 510px; width: 9px; height: 14px; z-index: 3; }
```
